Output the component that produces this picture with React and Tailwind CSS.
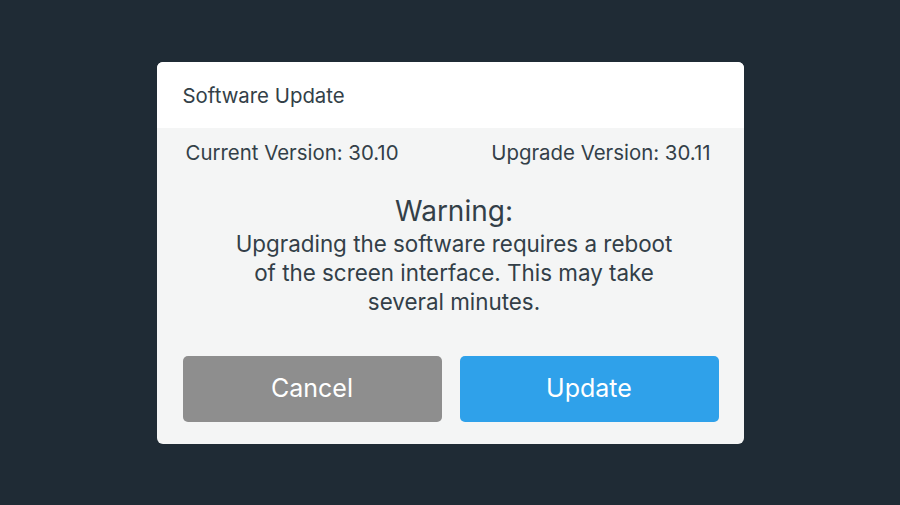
export default function App() {
  return (
    <div className="w-[900px] h-[505px] bg-[#1f2b35] flex items-start justify-center pt-[62px]" style={{ fontFamily: 'Inter, "Noto Sans", sans-serif' }}>
      <div className="w-[587px] h-[382px] rounded-[6px] overflow-hidden bg-[#f4f5f5] flex flex-col text-[#333f48]">
        <div className="h-[66px] bg-white flex items-center pl-[26px] pt-[2px] text-[20.4px]">Software Update</div>
        <div className="flex justify-between pl-[29px] pr-[33px] pt-[13px] text-[20.4px] leading-[24px]">
          <span>Current Version: 30.10</span>
          <span>Upgrade Version: 30.11</span>
        </div>
        <div className="pl-[8px] flex flex-col items-center">
          <div className="mt-[29px] text-center text-[28px] leading-[34px]">Warning:</div>
          <div className="w-[450px] text-center text-[22.4px] leading-[29px] mt-[1px]">
            Upgrading the software requires a reboot of the screen interface. This may take several minutes.
          </div>
        </div>
        <div className="mt-auto mb-[22px] pl-[26px] pr-[25px] flex gap-[18px]">
          <button className="flex-1 h-[66px] rounded-[5px] bg-[#8e8e8e] text-white text-[25px]">Cancel</button>
          <button className="flex-1 h-[66px] rounded-[5px] bg-[#2fa1ea] text-white text-[25px]">Update</button>
        </div>
      </div>
    </div>
  );
}
